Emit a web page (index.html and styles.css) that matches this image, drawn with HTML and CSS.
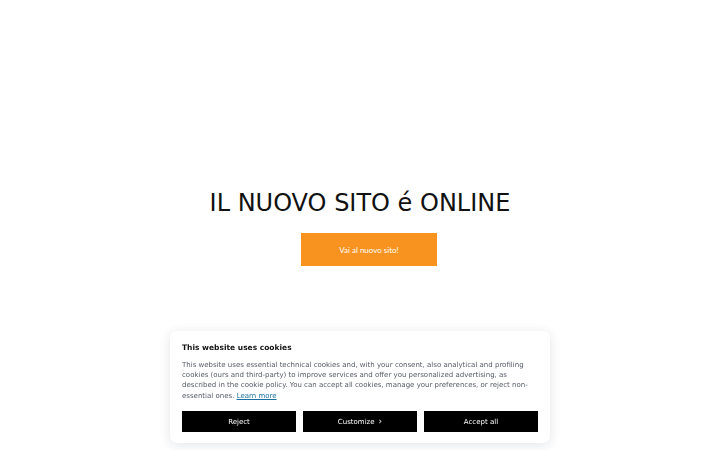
FILE: index.html
```html
<!DOCTYPE html>
<html lang="it">
<head>
<meta charset="utf-8">
<title>Il nuovo sito</title>
<link rel="stylesheet" href="styles.css">
</head>
<body>
<main class="hero">
  <h1 class="title">IL NUOVO SITO é ONLINE</h1>
  <a class="cta" href="#">Vai al nuovo sito!</a>
</main>
<div class="cookie">
  <h2 class="cookie-title">This website uses cookies</h2>
  <p class="cookie-text">This website uses essential technical cookies and, with your consent, also analytical and profiling cookies (ours and third-party) to improve services and offer you personalized advertising, as described in the cookie policy. You can accept all cookies, manage your preferences, or reject non-essential ones. <a class="learn" href="#">Learn more</a></p>
  <div class="cookie-buttons">
    <button class="cbtn">Reject</button>
    <button class="cbtn">Customize <span class="chev">›</span></button>
    <button class="cbtn">Accept all</button>
  </div>
</div>
</body>
</html>
```
FILE: styles.css
```css
html, body {
  margin: 0;
  padding: 0;
  background: #ffffff;
}
body {
  font-family: "DejaVu Sans", sans-serif;
}
.hero {
  height: 450px;
  display: flex;
  flex-direction: column;
  align-items: center;
  justify-content: flex-start;
  padding-top: 188px;
  box-sizing: border-box;
}
.title {
  margin: 0;
  font-weight: normal;
  font-size: 24px;
  line-height: 30px;
  color: #111;
}
.cta {
  margin-top: 15px;
  margin-left: 18px;
  width: 136px;
  height: 33px;
  background: #f7931e;
  color: #fff;
  font-family: Lato, sans-serif;
  font-size: 8px;
  display: flex;
  align-items: center;
  justify-content: center;
  text-decoration: none;
}
.cookie {
  position: fixed;
  left: 170px;
  bottom: 7px;
  width: 380px;
  box-sizing: border-box;
  padding: 12px 12px 11px;
  background: #fff;
  border-radius: 7px;
  box-shadow: 0 2px 12px rgba(20, 30, 60, 0.12);
}
.cookie-title {
  margin: 0;
  font-size: 7.5px;
  font-weight: bold;
  color: #111;
  line-height: 10px;
}
.cookie-text {
  margin: 7px 0 0;
  font-size: 7px;
  line-height: 10.3px;
  color: #555a66;
}
.learn {
  color: #1a6fa0;
  text-decoration: underline;
}
.cookie-buttons {
  margin-top: 10px;
  display: flex;
  gap: 7px;
}
.cbtn {
  flex: 1;
  height: 21px;
  border: none;
  background: #000;
  color: #fff;
  font-family: "DejaVu Sans", sans-serif;
  font-size: 7px;
  padding: 0;
  display: flex;
  align-items: center;
  justify-content: center;
  gap: 4px;
}
.chev {
  font-size: 9px;
  line-height: 1;
}
```
